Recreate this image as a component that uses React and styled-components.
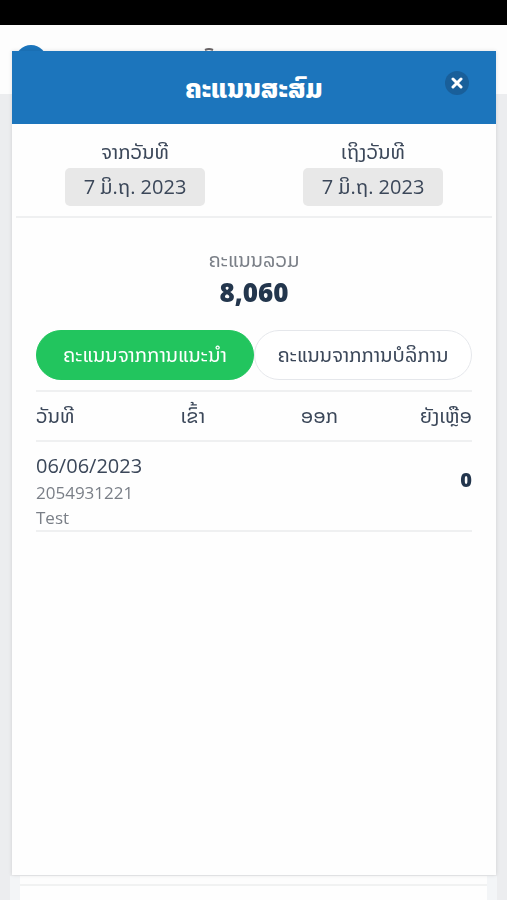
import { useState } from 'react';
import styled, { createGlobalStyle } from 'styled-components';

const points = {
    invite: [
        { date: "06/06/2023", phone: "2054931221", name: "Test", income: "", outcome: "", left: "0" },
    ],
    service: [],
};

export default function App(){

    const [tab, setTab] = useState ("invite");
    const [open, setOpen] = useState (true);

    return(
        <>
        <GlobalStyle />
        <Page>
            <StatusBar />
            <TopBar>
                <Logo viewBox="0 0 32 32" aria-hidden="true">
                    <circle cx="16" cy="16" r="16" fill="#1c75bc" />
                </Logo>
                <TopMark viewBox="0 0 10 32" aria-hidden="true">
                    <path d="M1 5 Q5 3 9 5" fill="none" stroke="#6b6668" strokeWidth="2" />
                </TopMark>
            </TopBar>
            <Content>
                <Panel>
                    <PanelCard />
                </Panel>
            </Content>
        </Page>
        {open && (
            <Modal role="dialog" aria-labelledby="modal-title">
                <Header>
                    <Title id="modal-title">ຄະແນນສະສົມ</Title>
                    <Close type="button" aria-label="ປິດ" onClick={() => setOpen(false)}>
                        <svg width="12" height="12" viewBox="0 0 12 12" aria-hidden="true">
                            <path d="M2 2 L10 10 M10 2 L2 10" stroke="#fff" strokeWidth="3" strokeLinecap="round" />
                        </svg>
                    </Close>
                </Header>
                <Dates>
                    <DateField>
                        <DateLabel id="from-label">ຈາກວັນທີ</DateLabel>
                        <DateButton type="button" aria-describedby="from-label">7 ມິ.ຖ. 2023</DateButton>
                    </DateField>
                    <DateField>
                        <DateLabel id="to-label">ເຖິງວັນທີ</DateLabel>
                        <DateButton type="button" aria-describedby="to-label">7 ມິ.ຖ. 2023</DateButton>
                    </DateField>
                </Dates>
                <Body>
                    <TotalLabel>ຄະແນນລວມ</TotalLabel>
                    <Total>8,060</Total>
                    <Tabs>
                        <Tab type="button" $active={tab === "invite"} onClick={() => setTab("invite")}>ຄະແນນຈາກການແນະນຳ</Tab>
                        <Tab type="button" $active={tab === "service"} onClick={() => setTab("service")}>ຄະແນນຈາກການບໍລິການ</Tab>
                    </Tabs>
                    <Table>
                        <thead>
                            <tr>
                                <HeadCell $width="27%">ວັນທີ</HeadCell>
                                <HeadCell $width="18%" $align="center">ເຂົ້າ</HeadCell>
                                <HeadCell $width="40%" $align="center">ອອກ</HeadCell>
                                <HeadCell $width="15%" $align="right">ຍັງເຫຼືອ</HeadCell>
                            </tr>
                        </thead>
                        <tbody>
                            {points[tab].map(item => (
                                <tr key={item.phone}>
                                    <Cell>
                                        <Day>{item.date}</Day>
                                        <Info>{item.phone}</Info>
                                        <Info>{item.name}</Info>
                                    </Cell>
                                    <Cell $align="center">{item.income}</Cell>
                                    <Cell $align="center">{item.outcome}</Cell>
                                    <Cell $align="right"><Left>{item.left}</Left></Cell>
                                </tr>
                            ))}
                        </tbody>
                    </Table>
                </Body>
            </Modal>
        )}
        </>
    )
}

const GlobalStyle = createGlobalStyle`
    * {
        box-sizing: border-box;
    }
    body {
        margin: 0;
        background-color: #ecedef;
        color: #3b4759;
        font-family: 'Open Sans', 'Noto Sans Lao', 'Noto Sans', sans-serif;
    }
    button {
        font-family: inherit;
        color: inherit;
        cursor: pointer;
    }
`;

const Page = styled.div`
    display: flex;
    flex-direction: column;
    height: 100vh;
    overflow: hidden;
`;

const StatusBar = styled.div`
    flex: none;
    height: 25px;
    background-color: #000;
`;

const TopBar = styled.header`
    flex: none;
    display: flex;
    align-items: flex-start;
    justify-content: space-between;
    height: 69px;
    padding: 20px 15px;
    background-color: #fdfdfd;
`;

const Logo = styled.svg`
    width: 32px;
    height: 32px;
`;

const TopMark = styled.svg`
    width: 10px;
    height: 32px;
    margin-right: 278px;
`;

const Content = styled.main`
    flex: 1;
    display: flex;
    align-items: flex-end;
    padding: 0 10px;
`;

const Panel = styled.section`
    flex: 1;
    height: 24px;
    padding: 0 10px;
    background-color: #f3f5f7;
`;

const PanelCard = styled.div`
    height: 24px;
    border-top: 8px solid #fdfdfd;
    background-color: #fefefe;
    box-shadow: inset 0 2px 0 #f1f2f2;
`;

const Modal = styled.div`
    position: fixed;
    top: 51px;
    right: 11px;
    bottom: 25px;
    left: 12px;
    background-color: #fefefe;
    box-shadow: 0 0 4px rgba(0, 0, 0, 0.12);
`;

const Header = styled.div`
    display: grid;
    grid-template-columns: 24px 1fr 24px;
    align-items: center;
    height: 73px;
    padding: 0 27px;
    background-color: #1c75bc;
`;

const Title = styled.h1`
    grid-column: 2;
    margin: 0;
    font-size: 27px;
    line-height: 32px;
    font-weight: 800;
    text-align: center;
    color: #fff;
`;

const Close = styled.button`
    display: flex;
    align-items: center;
    justify-content: center;
    width: 24px;
    height: 24px;
    margin-bottom: 10px;
    padding: 0;
    border: none;
    border-radius: 50%;
    background-color: #195f9a;
`;

const Dates = styled.div`
    display: grid;
    grid-template-columns: 1fr 1fr;
    margin: 0 4px;
    padding: 14px 0 10px;
    border-bottom: 2px solid #eff0f1;
`;

const DateField = styled.div`
    display: flex;
    flex-direction: column;
    align-items: center;
`;

const DateLabel = styled.span`
    padding-bottom: 2px;
    font-size: 20px;
    line-height: 28px;
`;

const DateButton = styled.button`
    width: 140px;
    height: 38px;
    padding: 0;
    border: none;
    border-radius: 5px;
    background-color: #e8e8e8;
    font-size: 20px;
    line-height: 36px;
`;

const Body = styled.div`
    padding: 26px 24px 0;
`;

const TotalLabel = styled.p`
    margin: 0;
    font-size: 20px;
    line-height: 32px;
    text-align: center;
    color: #7a7f87;
`;

const Total = styled.p`
    margin: 0 0 22px;
    font-size: 26px;
    line-height: 32px;
    font-weight: 800;
    text-align: center;
    color: #23364d;
`;

const Tabs = styled.div`
    display: grid;
    grid-template-columns: 1fr 1fr;
`;

const Tab = styled.button`
    height: 50px;
    padding: 0 0 2px;
    border: 1px solid ${props => props.$active ? "#22c55e" : "#e5e7eb"};
    border-radius: 25px;
    background-color: ${props => props.$active ? "#22c55e" : "#fff"};
    color: ${props => props.$active ? "#fff" : "inherit"};
    font-size: 20px;
`;

const Table = styled.table`
    width: 100%;
    margin-top: 10px;
    border-collapse: collapse;
    table-layout: fixed;
    border-top: 2px solid #eff0f1;
`;

const HeadCell = styled.th`
    width: ${props => props.$width};
    height: 50px;
    padding: 0 0 2px;
    border-bottom: 2px solid #eff0f1;
    font-size: 20px;
    font-weight: 400;
    text-align: ${props => props.$align || "left"};
    white-space: nowrap;
`;

const Cell = styled.td`
    padding: 10px 0 0;
    border-bottom: 2px solid #eff0f1;
    text-align: ${props => props.$align || "left"};
    vertical-align: top;
`;

const Day = styled.div`
    font-size: 20px;
    line-height: 28px;
`;

const Info = styled.div`
    font-size: 17px;
    line-height: 25px;
    color: #7a7f87;
`;

const Left = styled.strong`
    display: block;
    padding-top: 14px;
    font-size: 20px;
    line-height: 28px;
    font-weight: 800;
    color: #23364d;
`;
